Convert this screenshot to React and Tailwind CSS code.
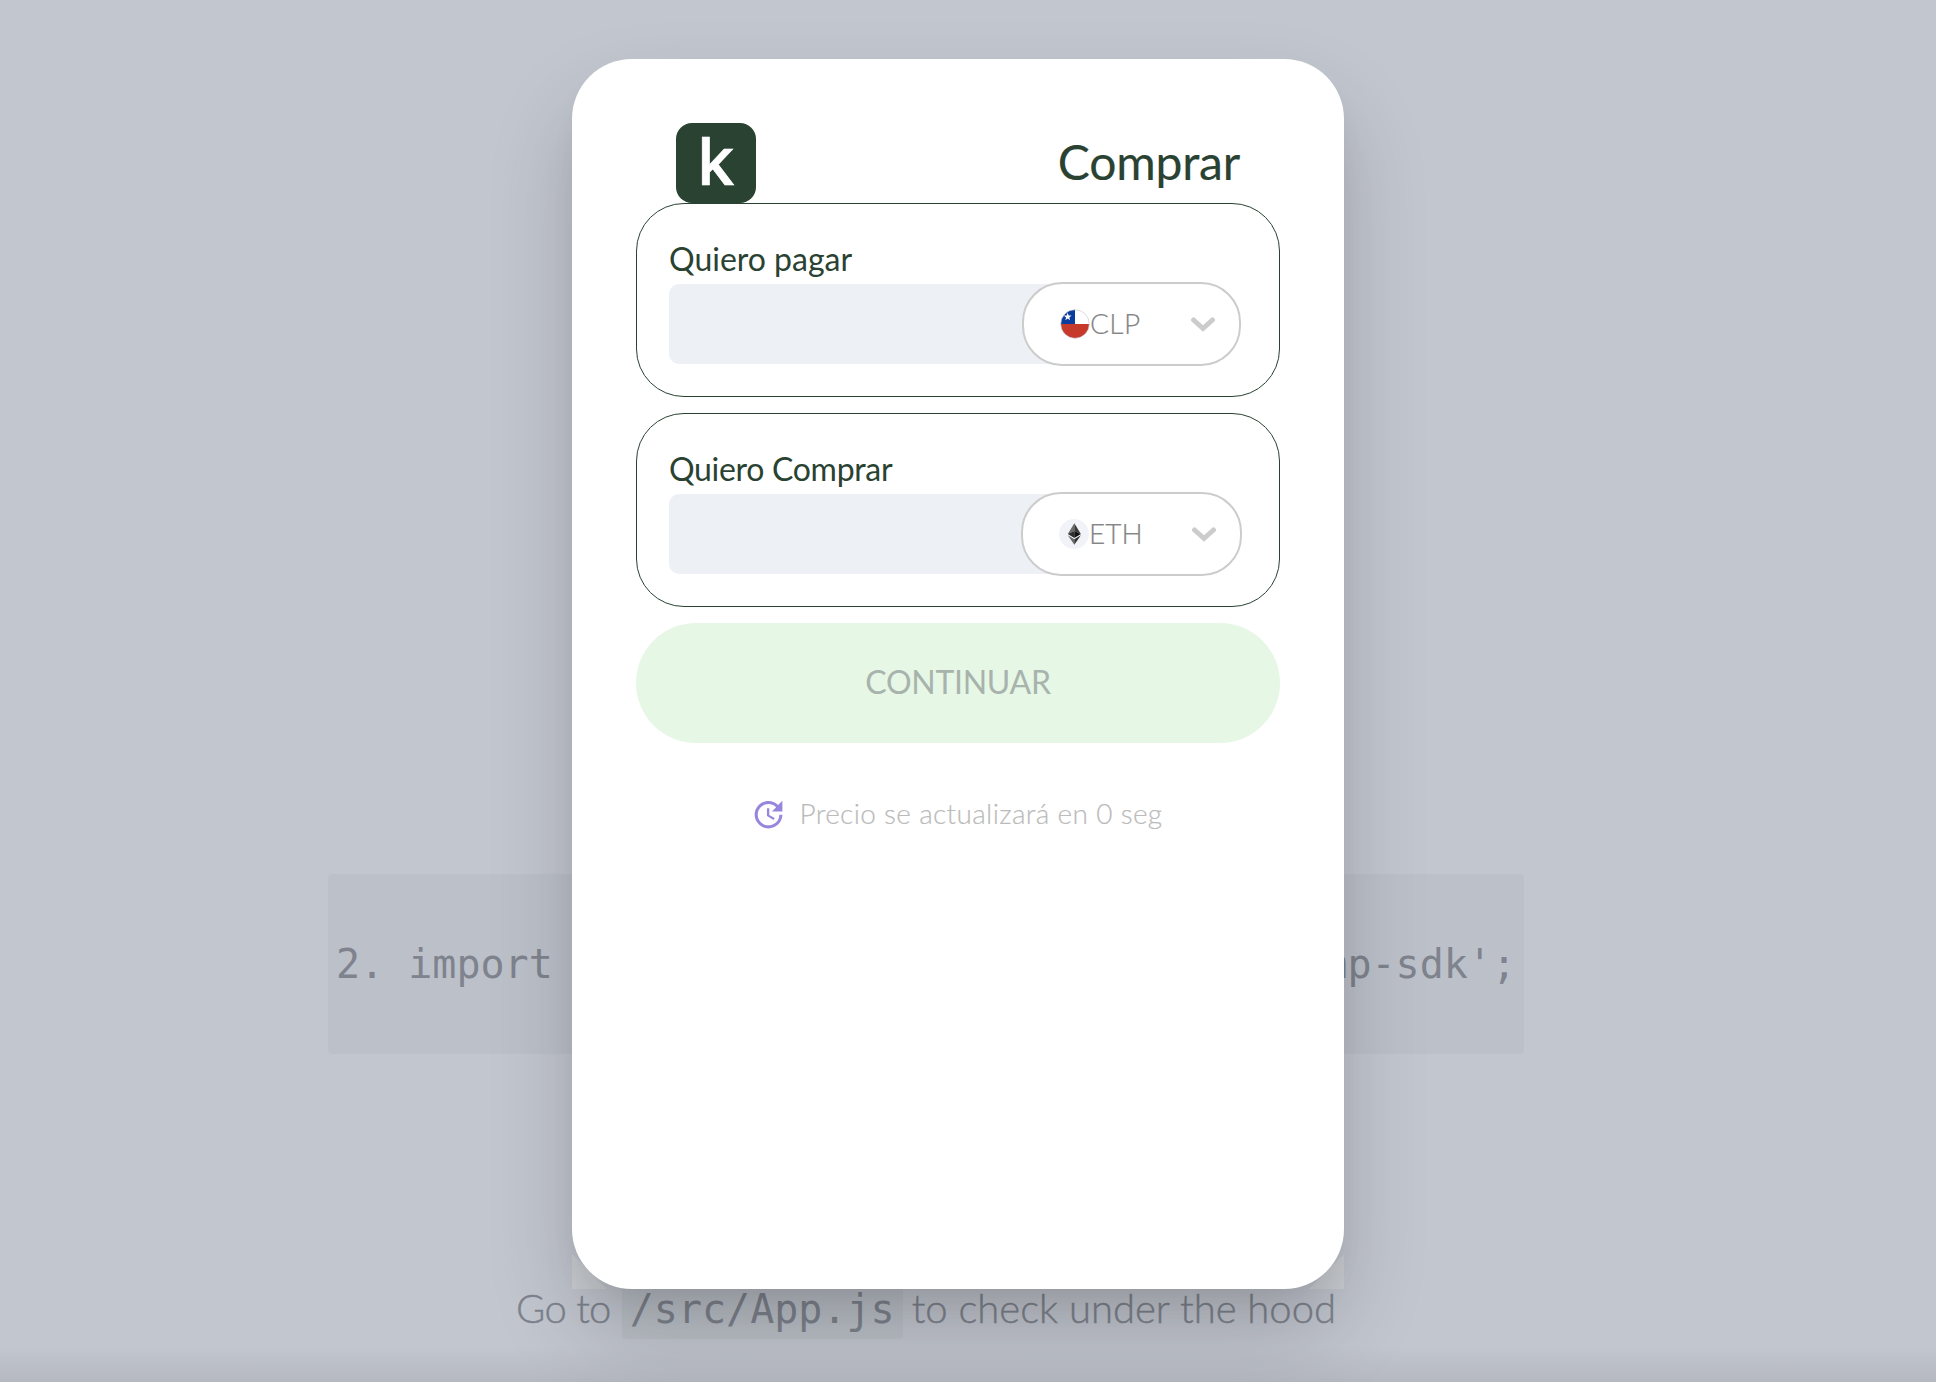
import { MdUpdate } from "react-icons/md";

function ChileFlag() {
  return (
    <svg className="size-[30px] shrink-0" viewBox="0 0 30 30" aria-hidden="true">
      <defs>
        <clipPath id="flag-circle">
          <circle cx="15" cy="15" r="14.2" />
        </clipPath>
      </defs>
      <g clipPath="url(#flag-circle)">
        <rect width="30" height="30" fill="#fff" />
        <rect width="15" height="15" fill="#0b3d9f" />
        <rect y="15" width="30" height="15" fill="#c53a2b" />
        <path d="M7.7 3.8l1 2.7 2.9.1-2.3 1.8.8 2.8-2.4-1.6-2.4 1.6.8-2.8-2.3-1.8 2.9-.1z" fill="#fff" />
      </g>
      <circle cx="15" cy="15" r="14.3" fill="none" stroke="#c9cdd6" strokeWidth=".7" />
    </svg>
  );
}

function EthIcon() {
  return (
    <svg className="size-[30px] shrink-0" viewBox="0 0 30 30" aria-hidden="true">
      <circle cx="15" cy="15" r="15" fill="#f2f3f8" />
      <path d="M15.3 4.2L8.8 15l6.5-2.9z" fill="#6b6b6b" />
      <path d="M15.3 4.2L21.9 15l-6.6-2.9z" fill="#3a3a3a" />
      <path d="M8.8 15l6.5 3.9v-6.8z" fill="#2f2f2f" />
      <path d="M21.9 15l-6.6 3.9v-6.8z" fill="#111" />
      <path d="M8.8 16.3l6.5 3.9v5.5z" fill="#6b6b6b" />
      <path d="M21.9 16.3l-6.6 3.9v5.5z" fill="#333" />
    </svg>
  );
}

function Chevron() {
  return (
    <svg className="mt-px h-[15px] w-6" viewBox="0 0 24 15" fill="none" aria-hidden="true">
      <path d="M2.6 3L12 11.5L21.4 3" stroke="#ccc" strokeWidth="5" strokeLinecap="round" strokeLinejoin="miter" />
    </svg>
  );
}

function AmountPanel({ label, labelClass, pillClass, icon, code, codeClass }) {
  return (
    <section className="h-[194px] rounded-[48px] border border-[#2a4232] p-8">
      <label className={"block h-12 text-[32px] leading-[46px] text-[#2a4232] " + labelClass}>{label}</label>
      <div className="flex h-20 items-center">
        <div className="h-20 w-[440px] shrink-0 rounded-[10px] bg-[#edf0f5]" />
        <button
          className={
            "relative flex h-[84px] shrink-0 items-center justify-between rounded-[40px] border-2 border-[#ccc] bg-white pl-9 pr-6 " +
            pillClass
          }
        >
          <span className="flex items-center">
            {icon}
            <span className={"pb-0.5 text-[28px] font-light leading-9 text-[#858585] [-webkit-text-stroke:0.2px] " + codeClass}>
              {code}
            </span>
          </span>
          <Chevron />
        </button>
      </div>
    </section>
  );
}

export default function App() {
  return (
    <div className="relative h-[1382px] w-full overflow-hidden bg-[#c2c6cf] font-['Lato',sans-serif]">
      <div className="flex w-[1852px] flex-col items-center pt-[874px] text-[40px] text-[#7e838d]">
        <pre className="flex h-[180px] items-center rounded-[4px] bg-[#bcc0c9] px-2 font-['DejaVu_Sans_Mono',monospace]">
          2. import KriptonRampSdk from 'kripton-ramp-sdk';
        </pre>
        <p className="mt-[230px] flex items-baseline leading-[48px] font-light [-webkit-text-stroke:0.4px]">
          <span className="mr-[11px] tracking-[-0.7px]">Go to</span>
          <code className="rounded-[4px] bg-[#bbc0c8] px-2 pb-1.5 font-['DejaVu_Sans_Mono',monospace] font-normal [-webkit-text-stroke:0]">
            /src/App.js
          </code>
          <span className="ml-[9px]">to check under the hood</span>
        </p>
      </div>

      <div className="absolute inset-x-0 bottom-0 h-9 bg-linear-to-b from-black/0 to-black/7" />

      <div className="absolute inset-0 isolate flex justify-center pr-5 pt-[59px]">
        <main className="relative h-[1230px] w-[772px] rounded-[60px] bg-white px-16 pt-16 shadow-[0_45px_85px_rgba(0,0,0,0.18),0_20px_40px_-20px_rgba(0,0,0,0.12)]">
          <div className="absolute bottom-0 left-0 -z-10 size-[35px] bg-[#cdd0d4] [clip-path:polygon(0_0,100%_100%,0_100%)]" />
          <div className="absolute bottom-0 right-0 -z-10 size-[35px] bg-[#cdd0d4] [clip-path:polygon(100%_0,100%_100%,0_100%)]" />
          <header className="flex h-20 items-center justify-between px-10">
            <div className="flex size-20 items-center justify-center rounded-[16px] bg-[#2a4232] pb-1 font-['Inter',sans-serif] text-[66px] font-medium leading-[76px] text-white [-webkit-text-stroke:0.7px]">
              k
            </div>
            <h1 className="pb-0.5 text-[48px] tracking-[-0.2px] text-[#2a4232] [-webkit-text-stroke:0.15px]">Comprar</h1>
          </header>

          <div className="flex flex-col gap-4">
            <AmountPanel
              label="Quiero pagar"
              labelClass="tracking-normal"
              pillClass="ml-[-87px] w-[219px]"
              icon={<ChileFlag />}
              code="CLP"
              codeClass="tracking-[0.4px]"
            />
            <AmountPanel
              label="Quiero Comprar"
              labelClass="tracking-[-0.3px]"
              pillClass="ml-[-88px] w-[221px]"
              icon={<EthIcon />}
              code="ETH"
              codeClass="tracking-normal"
            />
            <button className="h-[120px] rounded-full bg-[#e6f7e5] pb-0.5 text-[32px] tracking-[-0.3px] text-[#a8b3ad]">CONTINUAR</button>
          </div>

          <div className="mt-[52px] flex items-center justify-center gap-[13px] pr-[4px]">
            <MdUpdate className="size-[37px] text-[#9886dd]" />
            <span className="pb-[3px] text-[28px] font-light leading-9 tracking-[0.33px] text-[#bbb] [-webkit-text-stroke:0.2px]">
              Precio se actualizará en 0 seg
            </span>
          </div>
        </main>
      </div>
    </div>
  );
}
